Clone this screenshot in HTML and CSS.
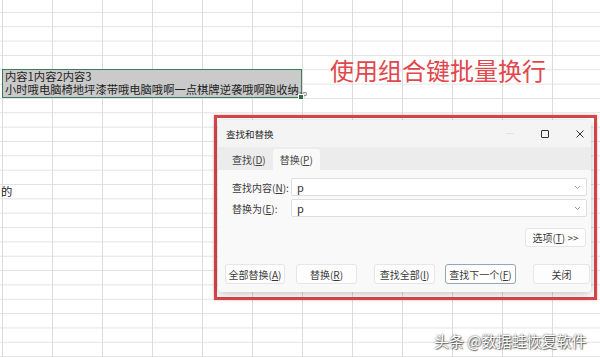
FILE: index.html
```html
<!DOCTYPE html>
<html lang="zh-CN">

<head>
    <meta charset="UTF-8">
    <meta name="viewport" content="width=device-width, initial-scale=1.0">
    <title>查找和替换</title>
    <link rel="stylesheet" href="styles.css">
</head>

<body>
    <div class="sheet">
        <div class="cell merged">
            <div class="line">内容1内容2内容3</div>
            <div class="line">小时哦电脑椅地坪漆带哦电脑哦啊一点棋牌逆袭哦啊跑收纳<span class="tail">ap</span></div>
            <span class="handle"></span>
        </div>
        <div class="cell note">使用组合键批量换行</div>
        <div class="cell stray">的</div>
    </div>

    <div class="mark"></div>

    <div class="dialog">
        <div class="titlebar">
            <span class="title">查找和替换</span>
            <span class="ctl min"></span>
            <span class="ctl max"></span>
            <svg class="ctl close" width="8" height="8" viewBox="0 0 8 8">
                <path d="M0.5 0.5 L7.5 7.5 M7.5 0.5 L0.5 7.5" stroke="#333" stroke-width="1" fill="none" />
            </svg>
        </div>
        <div class="tabs">
            <span class="tab">查找(<u>D</u>)</span>
            <span class="tab active">替换(<u>P</u>)</span>
        </div>
        <div class="panel">
            <div class="field">
                <label>查找内容(<u>N</u>):</label>
                <div class="combo"><span>p</span>
                    <svg width="7" height="5" viewBox="0 0 7 5"><path d="M1 1 L3.5 3.5 L6 1" stroke="#9a9a9a" fill="none" /></svg>
                </div>
            </div>
            <div class="field second">
                <label>替换为(<u>E</u>):</label>
                <div class="combo"><span>p</span>
                    <svg width="7" height="5" viewBox="0 0 7 5"><path d="M1 1 L3.5 3.5 L6 1" stroke="#9a9a9a" fill="none" /></svg>
                </div>
            </div>
            <div class="opts">
                <button class="btn options">选项(<u>T</u>) &gt;&gt;</button>
            </div>
            <div class="actions">
                <button class="btn b1">全部替换(<u>A</u>)</button>
                <button class="btn b2">替换(<u>R</u>)</button>
                <button class="btn b3">查找全部(<u>I</u>)</button>
                <button class="btn b4 default">查找下一个(<u>F</u>)</button>
                <button class="btn b5">关闭</button>
            </div>
        </div>
    </div>

    <div class="watermark">头条 @数据蛙恢复软件</div>
</body>

</html>
```

FILE: styles.css
```css
body {
    margin: 0;
    width: 600px;
    height: 357px;
    overflow: hidden;
    position: relative;
    background: #fff;
    font-family: "Noto Sans CJK SC", "Noto Sans", sans-serif;
    color: #222;
}

.sheet {
    width: 600px;
    height: 357px;
    display: grid;
    grid-template-columns: 2px repeat(12, 50px);
    grid-template-rows: 11.9px repeat(24, 14.35px);
    background-image:
        linear-gradient(to right, #dcdcdc 1px, transparent 1px),
        linear-gradient(to bottom, #e2e2e2 1px, transparent 1px);
    background-size: 50px 100%, 100% 14.35px;
    background-position: 2px 0, 0 11.9px;
}

.cell {
    font-size: 11.3px;
    white-space: nowrap;
}

.merged {
    grid-column: 2 / 8;
    grid-row: 6 / 8;
    position: relative;
    box-sizing: border-box;
    background: #c9cac9;
    border: 1.5px solid #3f7b5b;
    padding: 0 0 0 2px;
    color: #1e1e1e;
}

.line {
    height: 13px;
    line-height: 13px;
}

.tail {
    font-size: 7px;
    color: #555;
    position: relative;
    top: 2px;
}

.handle {
    position: absolute;
    right: -3px;
    bottom: -3px;
    width: 4px;
    height: 4px;
    background: #2f6e4d;
    border: 1px solid #fff;
}

.note {
    grid-column: 8 / 13;
    grid-row: 5 / 7;
    display: flex;
    align-items: center;
    padding-left: 28px;
    font-size: 24px;
    color: #e0484d;
}

.stray {
    grid-column: 1 / 3;
    grid-row: 14;
    line-height: 14.35px;
    padding-left: 1px;
}

.mark {
    position: absolute;
    left: 214px;
    top: 115px;
    width: 377px;
    height: 179px;
    border: 3px solid #d6474b;
    box-shadow: 0 0 2px rgba(230, 90, 90, 0.5);
}

.dialog {
    position: absolute;
    left: 218px;
    top: 120px;
    width: 373px;
    height: 172px;
    display: flex;
    flex-direction: column;
    background: #f1f1f1;
    box-shadow: 0 2px 8px rgba(0, 0, 0, 0.25);
    border-radius: 4px;
    font-size: 10px;
    color: #3a3a3a;
}

.titlebar {
    height: 27px;
    display: flex;
    align-items: center;
    padding: 0 7px 0 8px;
    background: #f4f4f4;
    border-radius: 4px 4px 0 0;
}

.title {
    font-size: 9.5px;
    color: #2a2a2a;
}

.ctl {
    flex-shrink: 0;
}

.min {
    margin-left: auto;
    width: 8px;
    height: 1px;
    background: #e2e2e2;
    margin-right: 27px;
}

.max {
    width: 6px;
    height: 6px;
    border: 1px solid #333;
    border-radius: 1px;
    margin-right: 27px;
}

.close {
    display: block;
}

.tabs {
    height: 23px;
    display: flex;
    align-items: flex-end;
    padding-left: 7px;
    background: #ececec;
}

.tab {
    height: 21px;
    line-height: 22px;
    padding: 0 7px;
    color: #444;
}

.tab.active {
    background: #f9f9f9;
    border-radius: 3px 3px 0 0;
}

.panel {
    flex: 1;
    background: #f9f9f9;
    padding: 8px 4px 0 14px;
    border-radius: 0 0 4px 4px;
}

.field {
    height: 18px;
    display: flex;
    align-items: center;
}

.field.second {
    margin-top: 3px;
}

.field label {
    width: 59px;
    flex-shrink: 0;
}

.combo {
    flex: 1;
    height: 18px;
    box-sizing: border-box;
    display: flex;
    align-items: center;
    justify-content: space-between;
    padding: 0 5px;
    background: #fff;
    border: 1px solid #dedede;
    border-radius: 2px;
    font-size: 11px;
    color: #333;
}

.opts {
    margin-top: 11px;
    display: flex;
    justify-content: flex-end;
    padding-right: 1px;
}

.btn {
    flex-shrink: 0;
    box-sizing: border-box;
    height: 20px;
    padding: 0;
    background: #fdfdfd;
    border: 1px solid #e6e6e6;
    border-radius: 3px;
    font-family: inherit;
    font-size: 10px;
    color: #3a3a3a;
}

.options {
    width: 61px;
    height: 19px;
}

.actions {
    margin-top: 17px;
    margin-left: -7px;
    display: flex;
}

.b1 {
    width: 60px;
}

.b2 {
    width: 61px;
    margin-left: 11px;
}

.b3 {
    width: 61px;
    margin-left: 17px;
}

.b4 {
    width: 71px;
    margin-left: 10px;
}

.b5 {
    width: 57px;
    margin-left: 17px;
}

.default {
    background: #fff;
    border-color: #93a6ba;
}

.watermark {
    position: absolute;
    left: 434px;
    top: 330px;
    font-size: 15px;
    color: #fff;
    text-shadow: 0 0 2px rgba(0, 0, 0, 0.8), 1px 1px 1px rgba(0, 0, 0, 0.5);
    white-space: nowrap;
}
```
